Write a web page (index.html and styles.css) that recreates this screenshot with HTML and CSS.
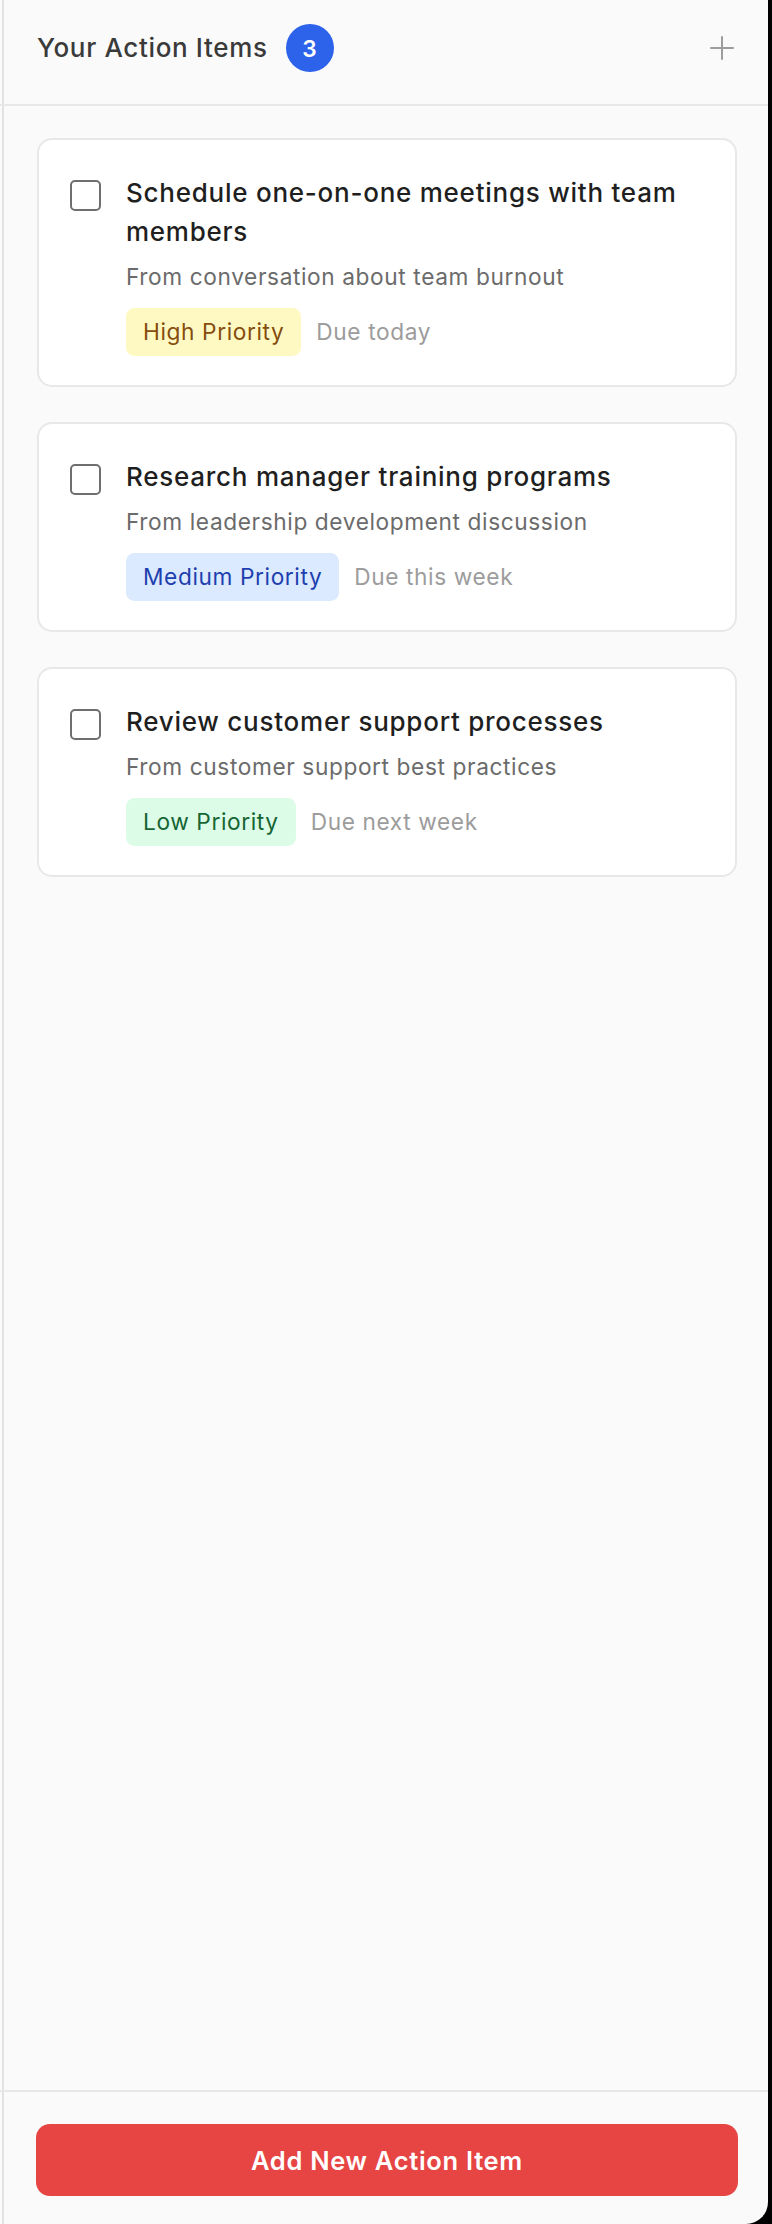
FILE: index.html
```html
<!DOCTYPE html>
<html lang="en">
<head>
<meta charset="utf-8">
<title>Your Action Items</title>
<link rel="stylesheet" href="styles.css">
</head>
<body>
<aside class="panel">
  <header class="panel-header">
    <div class="heading">
      <h2 class="heading-title">Your Action Items</h2>
      <span class="count">3</span>
    </div>
    <button class="icon-btn" type="button" aria-label="Add action item">
      <svg width="24" height="24" viewBox="0 0 24 24" fill="none" stroke="currentColor" stroke-width="2" stroke-linecap="round"><path d="M12 1v22M1 12h22"/></svg>
    </button>
  </header>

  <main class="list">
    <article class="card">
      <span class="checkbox"></span>
      <div class="card-body">
        <h3 class="card-title">Schedule one-on-one meetings with team members</h3>
        <p class="card-desc">From conversation about team burnout</p>
        <div class="meta">
          <span class="tag tag-high">High Priority</span>
          <span class="due">Due today</span>
        </div>
      </div>
    </article>

    <article class="card">
      <span class="checkbox"></span>
      <div class="card-body">
        <h3 class="card-title">Research manager training programs</h3>
        <p class="card-desc">From leadership development discussion</p>
        <div class="meta">
          <span class="tag tag-medium">Medium Priority</span>
          <span class="due">Due this week</span>
        </div>
      </div>
    </article>

    <article class="card">
      <span class="checkbox"></span>
      <div class="card-body">
        <h3 class="card-title">Review customer support processes</h3>
        <p class="card-desc">From customer support best practices</p>
        <div class="meta">
          <span class="tag tag-low">Low Priority</span>
          <span class="due">Due next week</span>
        </div>
      </div>
    </article>
  </main>

  <footer class="panel-footer">
    <button class="add-btn" type="button">Add New Action Item</button>
  </footer>
</aside>
</body>
</html>
```

FILE: styles.css
```css
* {
  box-sizing: border-box;
}

html,
body {
  margin: 0;
  padding: 0;
  background: #000;
}

body {
  font-family: Inter, "Noto Sans", "Liberation Sans", sans-serif;
  letter-spacing: 0.6px;
  width: 772px;
  height: 2224px;
  overflow: hidden;
}

.panel {
  width: 768px;
  height: 2224px;
  display: flex;
  flex-direction: column;
  background: linear-gradient(to right, #fafafa 2px, #e2e2e2 2px, #e2e2e2 4px, #fafafa 4px);
  border-bottom-right-radius: 22px;
}

/* Header */
.panel-header {
  height: 106px;
  flex: none;
  display: flex;
  align-items: center;
  justify-content: space-between;
  padding: 0 34px 8px 37px;
  border-bottom: 2px solid #e8e8e8;
}

.heading {
  display: flex;
  align-items: center;
  gap: 18px;
}

.heading-title {
  margin: 0;
  font-size: 26px;
  line-height: 36px;
  font-weight: 500;
  letter-spacing: 0.65px;
  color: #3a3a3a;
}

.count {
  width: 48px;
  height: 48px;
  border-radius: 50%;
  background: #2d62eb;
  color: #fff;
  font-size: 22.7px;
  font-weight: 600;
  letter-spacing: 0;
  display: flex;
  align-items: center;
  justify-content: center;
}

.icon-btn {
  border: 0;
  padding: 0;
  background: none;
  color: #9c9c9c;
  display: flex;
}

/* List */
.list {
  flex: 1;
  padding: 32px 31px 0 37px;
  display: flex;
  flex-direction: column;
  gap: 35px;
}

.card {
  display: flex;
  align-items: flex-start;
  gap: 25px;
  padding: 33px 30px 29px 31px;
  background: #fff;
  border: 2px solid #e8e8e8;
  border-radius: 15px;
}

.checkbox {
  flex: none;
  width: 31px;
  height: 31px;
  margin-top: 7px;
  border: 2px solid #6f6f6f;
  border-radius: 5px;
  background: #fff;
}

.card-body {
  flex: 1;
  min-width: 0;
}

.card-title {
  margin: 0;
  font-size: 26px;
  line-height: 39px;
  font-weight: 500;
  letter-spacing: 0.75px;
  color: #1f1f1f;
}

.card-desc {
  margin: 8.5px 0 0;
  font-size: 22.7px;
  line-height: 34px;
  color: #6b6b6b;
}

.meta {
  margin-top: 14.5px;
  display: flex;
  align-items: center;
  gap: 15px;
}

.tag {
  padding: 7px 17px;
  border-radius: 8.5px;
  font-size: 22.7px;
  line-height: 34px;
}

.tag-high {
  background: #fef9c3;
  color: #854d0e;
}

.tag-medium {
  background: #dbeafe;
  color: #1e40af;
}

.tag-low {
  background: #dcfce7;
  color: #166534;
}

.due {
  font-size: 22.7px;
  line-height: 34px;
  color: #9c9c9c;
}

/* Footer */
.panel-footer {
  flex: none;
  padding: 32px 30px 28px 36px;
  border-top: 2px solid #e8e8e8;
}

.add-btn {
  width: 100%;
  height: 72px;
  border: 0;
  border-radius: 14px;
  background: #e64543;
  color: #fff;
  font-family: inherit;
  font-size: 25.5px;
  font-weight: 600;
  letter-spacing: 0.7px;
}
```
